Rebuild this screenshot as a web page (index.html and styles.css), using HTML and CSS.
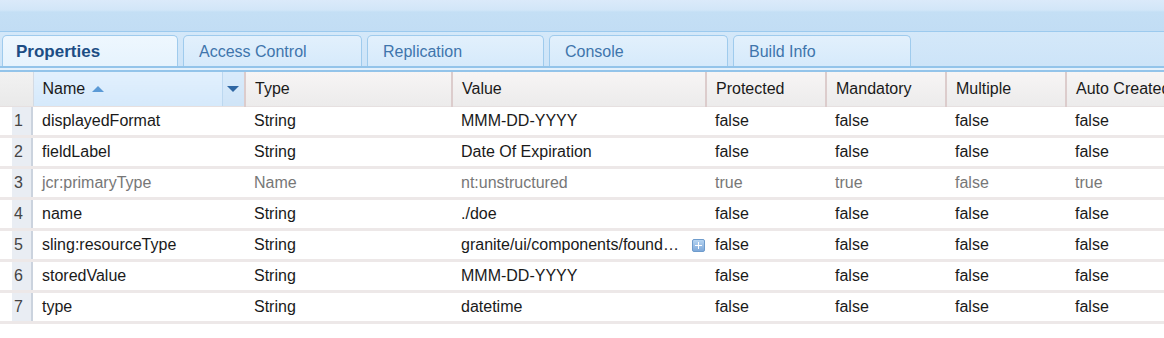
FILE: index.html
```html
<!DOCTYPE html>
<html lang="en">
<head>
    <meta charset="UTF-8">
    <title>Properties</title>
    <link rel="stylesheet" href="styles.css">
</head>
<body>
    <div class="top-band"></div>
    <div class="tab-strip">
        <div class="tab active">Properties</div>
        <div class="tab">Access Control</div>
        <div class="tab">Replication</div>
        <div class="tab">Console</div>
        <div class="tab">Build Info</div>
    </div>
    <div class="strip-line"></div>

    <div class="grid-wrap">
    <table class="grid">
        <colgroup>
            <col class="c-num">
            <col class="c-name">
            <col class="c-drop">
            <col class="c-type">
            <col class="c-value">
            <col class="c-flag">
            <col class="c-flag">
            <col class="c-flag">
            <col class="c-auto">
        </colgroup>
        <thead>
            <tr>
                <th class="num-head"></th>
                <th class="sorted">Name <span class="sort-up"></span></th>
                <th class="drop"><span class="sort-down"></span></th>
                <th>Type</th>
                <th>Value</th>
                <th>Protected</th>
                <th>Mandatory</th>
                <th>Multiple</th>
                <th>Auto Created</th>
            </tr>
        </thead>
        <tbody>
            <tr>
                <td class="num"><span>1</span></td>
                <td colspan="2">displayedFormat</td>
                <td>String</td>
                <td>MMM-DD-YYYY</td>
                <td>false</td><td>false</td><td>false</td><td>false</td>
            </tr>
            <tr>
                <td class="num"><span>2</span></td>
                <td colspan="2">fieldLabel</td>
                <td>String</td>
                <td>Date Of Expiration</td>
                <td>false</td><td>false</td><td>false</td><td>false</td>
            </tr>
            <tr class="system">
                <td class="num"><span>3</span></td>
                <td colspan="2">jcr:primaryType</td>
                <td>Name</td>
                <td>nt:unstructured</td>
                <td>true</td><td>true</td><td>false</td><td>true</td>
            </tr>
            <tr>
                <td class="num"><span>4</span></td>
                <td colspan="2">name</td>
                <td>String</td>
                <td>./doe</td>
                <td>false</td><td>false</td><td>false</td><td>false</td>
            </tr>
            <tr>
                <td class="num"><span>5</span></td>
                <td colspan="2">sling:resourceType</td>
                <td>String</td>
                <td><div class="long"><span class="clip">granite/ui/components/found…</span><span class="expand"></span></div></td>
                <td>false</td><td>false</td><td>false</td><td>false</td>
            </tr>
            <tr>
                <td class="num"><span>6</span></td>
                <td colspan="2">storedValue</td>
                <td>String</td>
                <td>MMM-DD-YYYY</td>
                <td>false</td><td>false</td><td>false</td><td>false</td>
            </tr>
            <tr>
                <td class="num"><span>7</span></td>
                <td colspan="2">type</td>
                <td>String</td>
                <td>datetime</td>
                <td>false</td><td>false</td><td>false</td><td>false</td>
            </tr>
        </tbody>
    </table>
    </div>
</body>
</html>
```

FILE: styles.css
```css
body {
    margin: 0;
    background: #ffffff;
    font-family: 'Liberation Sans', Arial, sans-serif;
    font-size: 16px;
    color: #1a1a1a;
    overflow: hidden;
}

.top-band {
    height: 31px;
    background: linear-gradient(to bottom, #dbeafa 0, #d2e6f8 10px, #c4dff5 12px, #c2ddf4 31px);
    border-bottom: 1px solid #9ccaee;
}

.tab-strip {
    display: flex;
    gap: 5px;
    padding: 3px 0 0 2px;
    height: 31px;
    background: linear-gradient(to bottom, #d4e8f9, #cde4f8);
}

.tab {
    box-sizing: border-box;
    width: 179px;
    padding-left: 15px;
    line-height: 31px;
    color: #3f75ac;
    border: 1px solid #9fcbed;
    border-bottom: none;
    border-radius: 5px 5px 0 0;
    background: linear-gradient(to bottom, #e2f0fc, #d6eafb);
}

.tab:nth-child(3) { width: 177px; }
.tab:nth-child(5) { width: 178px; }

.tab.active {
    width: 176px;
    padding-left: 13px;
    font-size: 17px;
    color: #1c4d84;
    font-weight: bold;
    background: linear-gradient(to bottom, #eef7fe, #e6f3fd);
}

.strip-line {
    height: 2px;
    border-top: 2px solid #93c4ea;
    border-bottom: 2px solid #93c4ea;
    background: #e4f1fc;
}

.grid-wrap {
    width: 100%;
    overflow: hidden;
}

.grid {
    border-collapse: collapse;
    table-layout: fixed;
    width: 1180px;
}

.c-num { width: 33px; }
.c-name { width: 189px; }
.c-drop { width: 23px; }
.c-type { width: 207px; }
.c-value { width: 254px; }
.c-flag { width: 120px; }
.c-auto { width: 234px; }

.grid th {
    height: 34px;
    padding: 0 0 0 9px;
    text-align: left;
    font-weight: normal;
    color: #1a1a1a;
    white-space: nowrap;
    overflow: hidden;
    background: linear-gradient(to bottom, #f7f5f5, #ecebeb);
    border-left: 2px solid #dccccc;
    border-bottom: 1px solid #e6e0e0;
}

.grid th.num-head {
    border-left: none;
    background: linear-gradient(to bottom, #f2f2f2, #e9e9e9);
    border-right: 1px solid #d4dbe4;
}

.grid th.sorted {
    border-left: 1px solid #b9d6ef;
    background: linear-gradient(to bottom, #e2f0fd, #d5e9fb);
}

.grid th.drop {
    padding: 0;
    border-left: 1px solid #bcd8f0;
    background: linear-gradient(to bottom, #d9ebfb, #cfe4f7);
    text-align: center;
}

.sort-up {
    display: inline-block;
    width: 0;
    height: 0;
    margin-left: 2px;
    vertical-align: 2px;
    border-left: 6px solid transparent;
    border-right: 6px solid transparent;
    border-bottom: 6px solid #5b9ad6;
}

.sort-down {
    display: inline-block;
    width: 0;
    height: 0;
    vertical-align: 2px;
    border-left: 6px solid transparent;
    border-right: 6px solid transparent;
    border-top: 6px solid #2f67a3;
}

.grid td {
    height: 28px;
    padding: 0 0 0 9px;
    white-space: nowrap;
    overflow: hidden;
    border-bottom: 3px solid #ede8e8;
}

.grid td.num {
    padding: 0 0 0 12px;
    color: #444;
}

.grid td.num span {
    display: block;
    line-height: 28px;
    text-align: right;
    padding-right: 8px;
    background: #e9edf3;
    border-right: 2px solid #cbd3de;
}

.system td {
    color: #777;
}

.long {
    display: flex;
    align-items: center;
    justify-content: space-between;
    padding-right: 1px;
}

.clip {
    overflow: hidden;
}

.expand {
    position: relative;
    flex: none;
    width: 11px;
    height: 11px;
    border: 1px solid #6f9ccc;
    border-radius: 2px;
    background: linear-gradient(to bottom, #b7d5f2, #7fa9da);
}

.expand::before,
.expand::after {
    content: "";
    position: absolute;
    background: #fff;
}

.expand::before {
    left: 2px;
    top: 5px;
    width: 7px;
    height: 1px;
}

.expand::after {
    left: 5px;
    top: 2px;
    width: 1px;
    height: 7px;
}
```
